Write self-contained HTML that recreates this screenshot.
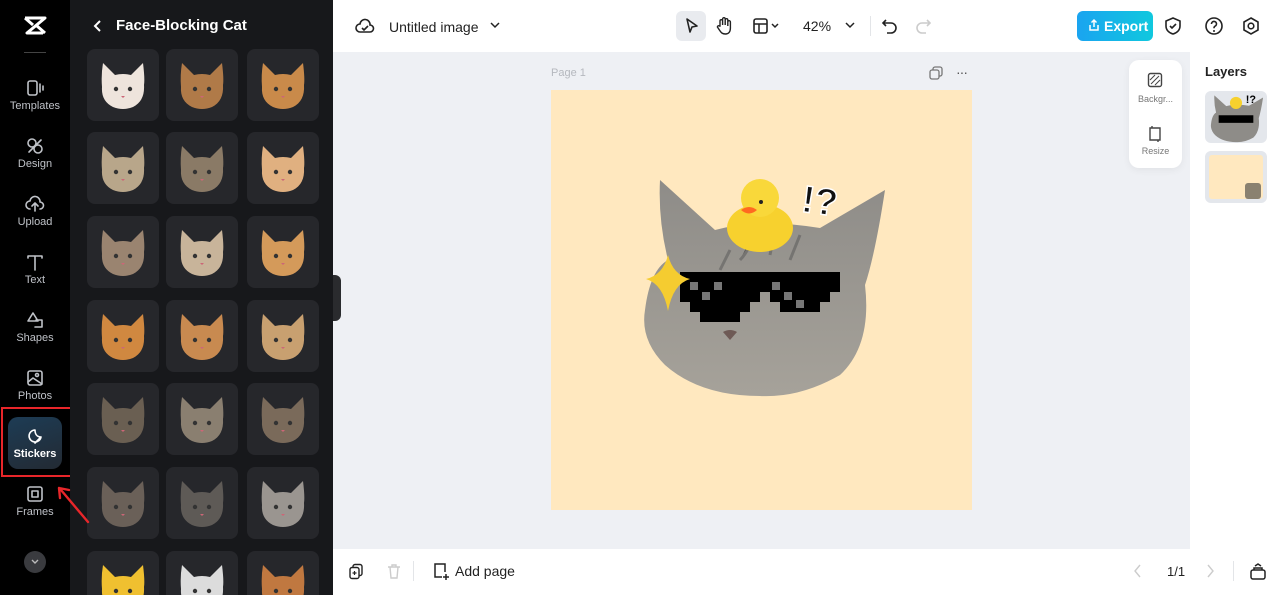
<!DOCTYPE html>
<html style="overflow:hidden;height:595px"><head><meta charset="utf-8"><style>
*{margin:0;padding:0;box-sizing:border-box}
body{width:1280px;height:595px;overflow:hidden;font-family:"Liberation Sans",sans-serif;background:#eef0f4;position:relative}
.a{position:absolute}
#side{left:0;top:0;width:70px;height:595px;background:#000}
.nav{position:absolute;left:0;width:70px;text-align:center;color:#bfc2c8;font-size:11px}
.nav svg{display:block;margin:0 auto 3px}
#panel{left:70px;top:0;width:263px;height:595px;background:#17181b;overflow:hidden}
.tile{position:absolute;width:72px;height:72px;background:#26272b;border-radius:8px;overflow:hidden}
.tile svg{width:72px;height:72px}
#top{left:333px;top:0;width:947px;height:52px;background:#fff}
#bot{left:333px;top:549px;width:947px;height:46px;background:#fff}
#right{left:1190px;top:52px;width:90px;height:497px;background:#fff}
.ic{stroke:#222;fill:none;stroke-width:1.6;stroke-linecap:round;stroke-linejoin:round}
</style></head><body>
<div id="side" class="a">
 <svg class="a" style="left:23px;top:16px" width="24" height="20" viewBox="0 0 24 20"><path d="M2 2h20L4 17h16M2 2l8 7M22 17l-8-7" stroke="#fff" stroke-width="3" fill="none" stroke-linejoin="round"/></svg>
 <div class="a" style="left:24px;top:52px;width:22px;height:1px;background:#444"></div>
 <div class="nav" style="top:79px"><svg width="20" height="18" class="ic" style="stroke:#bfc2c8"><rect x="3" y="2" width="9" height="14" rx="2"/><path d="M15 5v8M18 7v4"/></svg>Templates</div>
 <div class="nav" style="top:137px"><svg width="20" height="18" class="ic" style="stroke:#bfc2c8"><circle cx="7" cy="6" r="4"/><circle cx="13" cy="12" r="4"/><path d="M4 15l12-12"/></svg>Design</div>
 <div class="nav" style="top:195px"><svg width="20" height="18" class="ic" style="stroke:#bfc2c8"><path d="M5 14a4 4 0 0 1 0-8 5 5 0 0 1 10 1 3.5 3.5 0 0 1 0 7M10 16V9M7 11l3-3 3 3"/></svg>Upload</div>
 <div class="nav" style="top:253px"><svg width="20" height="18" class="ic" style="stroke:#bfc2c8"><path d="M3 3h14M10 3v14M3 3v2M17 3v2"/></svg>Text</div>
 <div class="nav" style="top:311px"><svg width="20" height="18" class="ic" style="stroke:#bfc2c8"><path d="M8 2l5 8H3zM11 9h6v7h-7"/></svg>Shapes</div>
 <div class="nav" style="top:369px"><svg width="20" height="18" class="ic" style="stroke:#bfc2c8"><rect x="3" y="2" width="14" height="14" rx="2"/><path d="M3 13l5-4 9 6"/><circle cx="12" cy="6" r="1.5"/></svg>Photos</div>
 <div class="a" style="left:1px;top:407px;width:71px;height:70px;border:2px solid #e8262a"></div>
 <div class="a" style="left:8px;top:417px;width:54px;height:52px;border-radius:10px;background:linear-gradient(160deg,#1d3c55,#232a33)"></div>
 <div class="nav" style="top:427px;color:#fff;font-weight:bold"><svg width="20" height="18" class="ic" style="stroke:#fff"><path d="M16 10a6 6 0 1 1-6-7c0 4 2 7 6 7zM16 10l-6 6"/></svg>Stickers</div>
 <div class="nav" style="top:485px"><svg width="20" height="18" class="ic" style="stroke:#bfc2c8"><rect x="3" y="2" width="14" height="14" rx="2"/><rect x="7" y="6" width="6" height="6"/></svg>Frames</div>
 <div class="a" style="left:24px;top:551px;width:22px;height:22px;border-radius:50%;background:#3a3b3f"></div>
 <svg class="a" style="left:30px;top:558px" width="10" height="8"><path d="M2 2l3 3 3-3" stroke="#bbb" fill="none" stroke-width="1.4"/></svg>
</div>
<div id="panel" class="a">
 <svg class="a" style="left:22px;top:19px" width="12" height="14"><path d="M8 2L3 7l5 5" stroke="#fff" stroke-width="2" fill="none"/></svg>
 <div class="a" style="left:46px;top:17px;color:#fff;font-weight:bold;font-size:15px">Face-Blocking Cat</div>
<script>
var cols=[17,96,177],rows=[49,132,216,300,383,467,551];
var c=['#eee4dc','#b07a48','#c98a4a','#b8a68a','#8a7a66','#e0b080','#9a8470','#c8b49a','#d49a5a','#d08840','#c88a50','#c8a070','#6a5f52','#8a7f70','#7a6a5a','#6a6058','#5e5a56','#9a9590','#f0c030','#dcdcdc','#c07840'];
var h='';
for(var r=0;r<7;r++)for(var k=0;k<3;k++){var col=c[r*3+k];
h+='<div class="tile" style="left:'+cols[k]+'px;top:'+rows[r]+'px"><svg viewBox="0 0 72 72"><path d="M16 14L28 26Q36 24 44 26L56 14Q58 30 57 36Q58 52 46 58Q36 62 26 58Q14 52 15 38Q14 26 16 14z" fill="'+col+'"/><circle cx="29" cy="40" r="2.2" fill="#333"/><circle cx="43" cy="40" r="2.2" fill="#333"/><path d="M34 47h4l-2 2z" fill="#c67"/></svg></div>';}
document.write(h);
</script>
</div>
<svg class="a" style="left:52px;top:480px" width="40" height="46"><path d="M36 42L9 10M7 8l1 10M7 8l10 2" stroke="#e8262a" stroke-width="2.4" fill="none" stroke-linecap="round"/></svg>
<div class="a" style="left:333px;top:275px;width:8px;height:46px;background:#2a2b2e;border-radius:0 6px 6px 0"></div>
<div id="top" class="a">
 <svg class="a" style="left:22px;top:17px" width="20" height="18"><path d="M5 15a4 4 0 0 1 0-8 5 5 0 0 1 10 1 3.5 3.5 0 0 1 0 7z M7 11l2 2 4-4" stroke="#222" stroke-width="1.6" fill="none"/></svg>
 <div class="a" style="left:56px;top:19px;font-size:14px;color:#222">Untitled image</div>
 <svg class="a" style="left:157px;top:22px" width="10" height="8"><path d="M1 1l4 4 4-4" stroke="#222" stroke-width="1.5" fill="none"/></svg>
 <div class="a" style="left:343px;top:11px;width:30px;height:30px;border-radius:6px;background:#e9ebef"></div>
 <svg class="a" style="left:350px;top:17px" width="18" height="18"><path d="M4 2l10 7-5 1-2 5z" stroke="#222" stroke-width="1.6" fill="none" stroke-linejoin="round"/></svg>
 <svg class="a" style="left:382px;top:16px" width="18" height="20"><path d="M5 10V5a1.3 1.3 0 0 1 2.6 0v4V3a1.3 1.3 0 0 1 2.6 0v6V4a1.3 1.3 0 0 1 2.6 0v6V6a1.3 1.3 0 0 1 2.6 0v6c0 4-2 6-5 6s-4-1-6-4l-2-3a1.2 1.2 0 0 1 2-1z" stroke="#222" stroke-width="1.4" fill="none"/></svg>
 <svg class="a" style="left:419px;top:17px" width="30" height="18"><rect x="2" y="2" width="13" height="14" rx="2" stroke="#222" stroke-width="1.6" fill="none"/><path d="M2 7h13M7 7v9M20 7l3 3 3-3" stroke="#222" stroke-width="1.5" fill="none"/></svg>
 <div class="a" style="left:470px;top:18px;font-size:14px;color:#222">42%</div>
 <svg class="a" style="left:512px;top:22px" width="10" height="8"><path d="M1 1l4 4 4-4" stroke="#222" stroke-width="1.5" fill="none"/></svg>
 <div class="a" style="left:537px;top:16px;width:1px;height:20px;background:#e3e5e8"></div>
 <svg class="a" style="left:548px;top:17px" width="18" height="18"><path d="M5 3L2 6l3 3M2 6h8a5 5 0 0 1 0 10H6" stroke="#222" stroke-width="1.6" fill="none"/></svg>
 <svg class="a" style="left:581px;top:17px" width="18" height="18"><path d="M13 3l3 3-3 3M16 6H8a5 5 0 0 0 0 10h4" stroke="#ccc" stroke-width="1.6" fill="none"/></svg>
 <div class="a" style="left:744px;top:11px;width:76px;height:30px;border-radius:6px;background:linear-gradient(90deg,#1aa4f0,#10c8de);color:#fff;font-weight:bold;font-size:14px;line-height:30px;padding-left:27px">Export</div>
 <svg class="a" style="left:754px;top:18px" width="14" height="14"><path d="M3 7v5h8V7M7 9V2M4.5 4.5L7 2l2.5 2.5" stroke="#fff" stroke-width="1.5" fill="none"/></svg>
 <svg class="a" style="left:830px;top:16px" width="20" height="20"><path d="M10 2l7 3v5c0 4-3 7-7 8-4-1-7-4-7-8V5z M7 10l2 2 4-4" stroke="#222" stroke-width="1.6" fill="none"/></svg>
 <svg class="a" style="left:871px;top:16px" width="20" height="20"><circle cx="10" cy="10" r="8" stroke="#222" stroke-width="1.6" fill="none"/><path d="M7.5 8a2.5 2.5 0 1 1 3.5 2.2c-.8.4-1 1-1 2" stroke="#222" stroke-width="1.6" fill="none"/><circle cx="10" cy="15" r="1" fill="#222"/></svg>
 <svg class="a" style="left:908px;top:16px" width="20" height="20"><path d="M10 2l7 4v8l-7 4-7-4V6z" stroke="#222" stroke-width="1.6" fill="none"/><circle cx="10" cy="10" r="2.8" stroke="#222" stroke-width="1.6" fill="none"/></svg>
</div>
<div class="a" style="left:551px;top:67px;font-size:11px;color:#b5b8be">Page 1</div>
<svg class="a" style="left:929px;top:66px" width="14" height="14"><rect x="4" y="1" width="9" height="9" rx="2" stroke="#777" stroke-width="1.3" fill="none"/><rect x="1" y="4" width="9" height="9" rx="2" stroke="#777" stroke-width="1.3" fill="#eef0f4"/></svg>
<div class="a" style="left:956px;top:64px;font-size:14px;color:#555;letter-spacing:-1px">···</div>
<div class="a" style="left:551px;top:90px;width:421px;height:420px;background:#ffe8bf"></div>
<svg class="a" style="left:620px;top:160px" width="280" height="240" viewBox="0 0 280 240">
 <defs><linearGradient id="g" x1="0" y1="0" x2="0" y2="1"><stop offset="0" stop-color="#8e8c88"/><stop offset="1" stop-color="#a6a29a"/></linearGradient></defs>
 <path d="M40 20L95 70Q140 58 200 68L265 30Q255 95 245 125Q252 185 220 215Q180 238 140 236Q80 236 45 205Q20 180 25 150Q30 110 48 100Q38 60 40 20z" fill="url(#g)"/>
 <path d="M120 100Q130 90 135 70M150 95l5-25M100 110l10-20M170 100l10-25" stroke="#555" stroke-width="3" opacity=".5"/>
 <path d="M60 112h160v20h-10v10h-10v10h-40v-10h-10v-10h-10v10h-10v10h-10v10h-40v-10h-10v-10h-10z" fill="#000"/>
 <g fill="#777"><rect x="70" y="122" width="8" height="8"/><rect x="82" y="132" width="8" height="8"/><rect x="94" y="122" width="8" height="8"/><rect x="152" y="122" width="8" height="8"/><rect x="164" y="132" width="8" height="8"/><rect x="176" y="140" width="8" height="8"/></g>
 <path d="M103 172q7-4 14 0l-7 8z" fill="#6e5a55"/>
 <path d="M48 95q5 20 22 24q-17 5-22 32q-5-27-22-32q17-4 22-24z" fill="#f5cc30"/>
 <ellipse cx="140" cy="68" rx="33" ry="24" fill="#f7d12e"/>
 <circle cx="140" cy="38" r="19" fill="#f9d83a"/>
 <path d="M121 50q8-6 16 0q-8 7-16 0z" fill="#ff6a20"/>
 <circle cx="141" cy="42" r="2" fill="#222"/>
 <text x="182" y="54" font-family="Liberation Sans" font-weight="bold" font-size="38" fill="#111" stroke="#fff" stroke-width="1.5" transform="rotate(8 200 40)">!?</text>
</svg>
<div class="a" style="left:1129px;top:60px;width:53px;height:108px;background:#fff;border-radius:10px;box-shadow:0 2px 8px rgba(0,0,0,.06)"></div>
<svg class="a" style="left:1147px;top:72px" width="16" height="16"><rect x="1.5" y="1.5" width="13" height="13" rx="2" stroke="#444" stroke-width="1.4" fill="none"/><path d="M4 12l8-8M8 13l5-5M3 8l5-5" stroke="#444" stroke-width="1"/></svg>
<div class="a" style="left:1129px;top:94px;width:53px;text-align:center;font-size:9px;color:#777">Backgr...</div>
<svg class="a" style="left:1147px;top:125px" width="16" height="18"><path d="M3 3v12h10V3z M5 1v2M11 15v2" stroke="#444" stroke-width="1.4" fill="none"/></svg>
<div class="a" style="left:1129px;top:146px;width:53px;text-align:center;font-size:9px;color:#777">Resize</div>
<div id="right" class="a">
 <div class="a" style="left:15px;top:12px;font-size:13px;font-weight:bold;color:#222">Layers</div>
 <div class="a" style="left:15px;top:39px;width:62px;height:52px;border-radius:6px;background:#e4e7ec;overflow:hidden">
  <svg width="62" height="52" viewBox="0 0 280 240"><path d="M40 20L95 70Q140 58 200 68L265 30Q255 95 245 125Q252 185 220 215Q180 238 140 236Q80 236 45 205Q20 180 25 150Q30 110 48 100Q38 60 40 20z" fill="#8e8c88"/><rect x="60" y="112" width="160" height="35" fill="#000"/><circle cx="140" cy="55" r="28" fill="#f7d12e"/><text x="185" y="55" font-size="50" font-weight="bold" font-family="Liberation Sans">!?</text></svg>
 </div>
 <div class="a" style="left:15px;top:99px;width:62px;height:52px;border-radius:6px;background:#e4e7ec;padding:4px"><div style="width:54px;height:44px;background:#ffe8bf;border-radius:3px"></div></div>
 <div class="a" style="left:55px;top:131px;width:16px;height:16px;background:#8a8170;border-radius:3px"></div>
</div>
<div id="bot" class="a">
 <svg class="a" style="left:15px;top:14px" width="16" height="18"><rect x="5" y="1.5" width="9" height="11" rx="2" stroke="#222" stroke-width="1.4" fill="none"/><rect x="2" y="4.5" width="9" height="11" rx="2" stroke="#222" stroke-width="1.4" fill="#fff"/><path d="M6.5 8v4M4.5 10h4" stroke="#222" stroke-width="1.2"/></svg>
 <svg class="a" style="left:53px;top:14px" width="16" height="18"><path d="M2 4h12M6 4V2h4v2M4 4l1 11h6l1-11" stroke="#ccc" stroke-width="1.4" fill="none"/></svg>
 <div class="a" style="left:80px;top:12px;width:1px;height:20px;background:#e3e5e8"></div>
 <svg class="a" style="left:99px;top:13px" width="18" height="20"><path d="M10 15H3V2h10v8M14 12v6M11 15h6" stroke="#222" stroke-width="1.5" fill="none"/></svg>
 <div class="a" style="left:122px;top:14px;font-size:14px;color:#222">Add page</div>
 <svg class="a" style="left:800px;top:14px" width="10" height="16"><path d="M7 2L2 8l5 6" stroke="#ccc" stroke-width="1.4" fill="none"/></svg>
 <div class="a" style="left:834px;top:15px;font-size:13px;color:#222">1/1</div>
 <svg class="a" style="left:872px;top:14px" width="10" height="16"><path d="M3 2l5 6-5 6" stroke="#ccc" stroke-width="1.4" fill="none"/></svg>
 <div class="a" style="left:900px;top:12px;width:1px;height:20px;background:#e3e5e8"></div>
 <svg class="a" style="left:916px;top:13px" width="18" height="20"><rect x="2" y="8" width="14" height="9" rx="2" stroke="#222" stroke-width="1.5" fill="none"/><path d="M5 8V6h8v2M6 4l3-2 3 2" stroke="#222" stroke-width="1.5" fill="none"/></svg>
</div>
</body></html>
